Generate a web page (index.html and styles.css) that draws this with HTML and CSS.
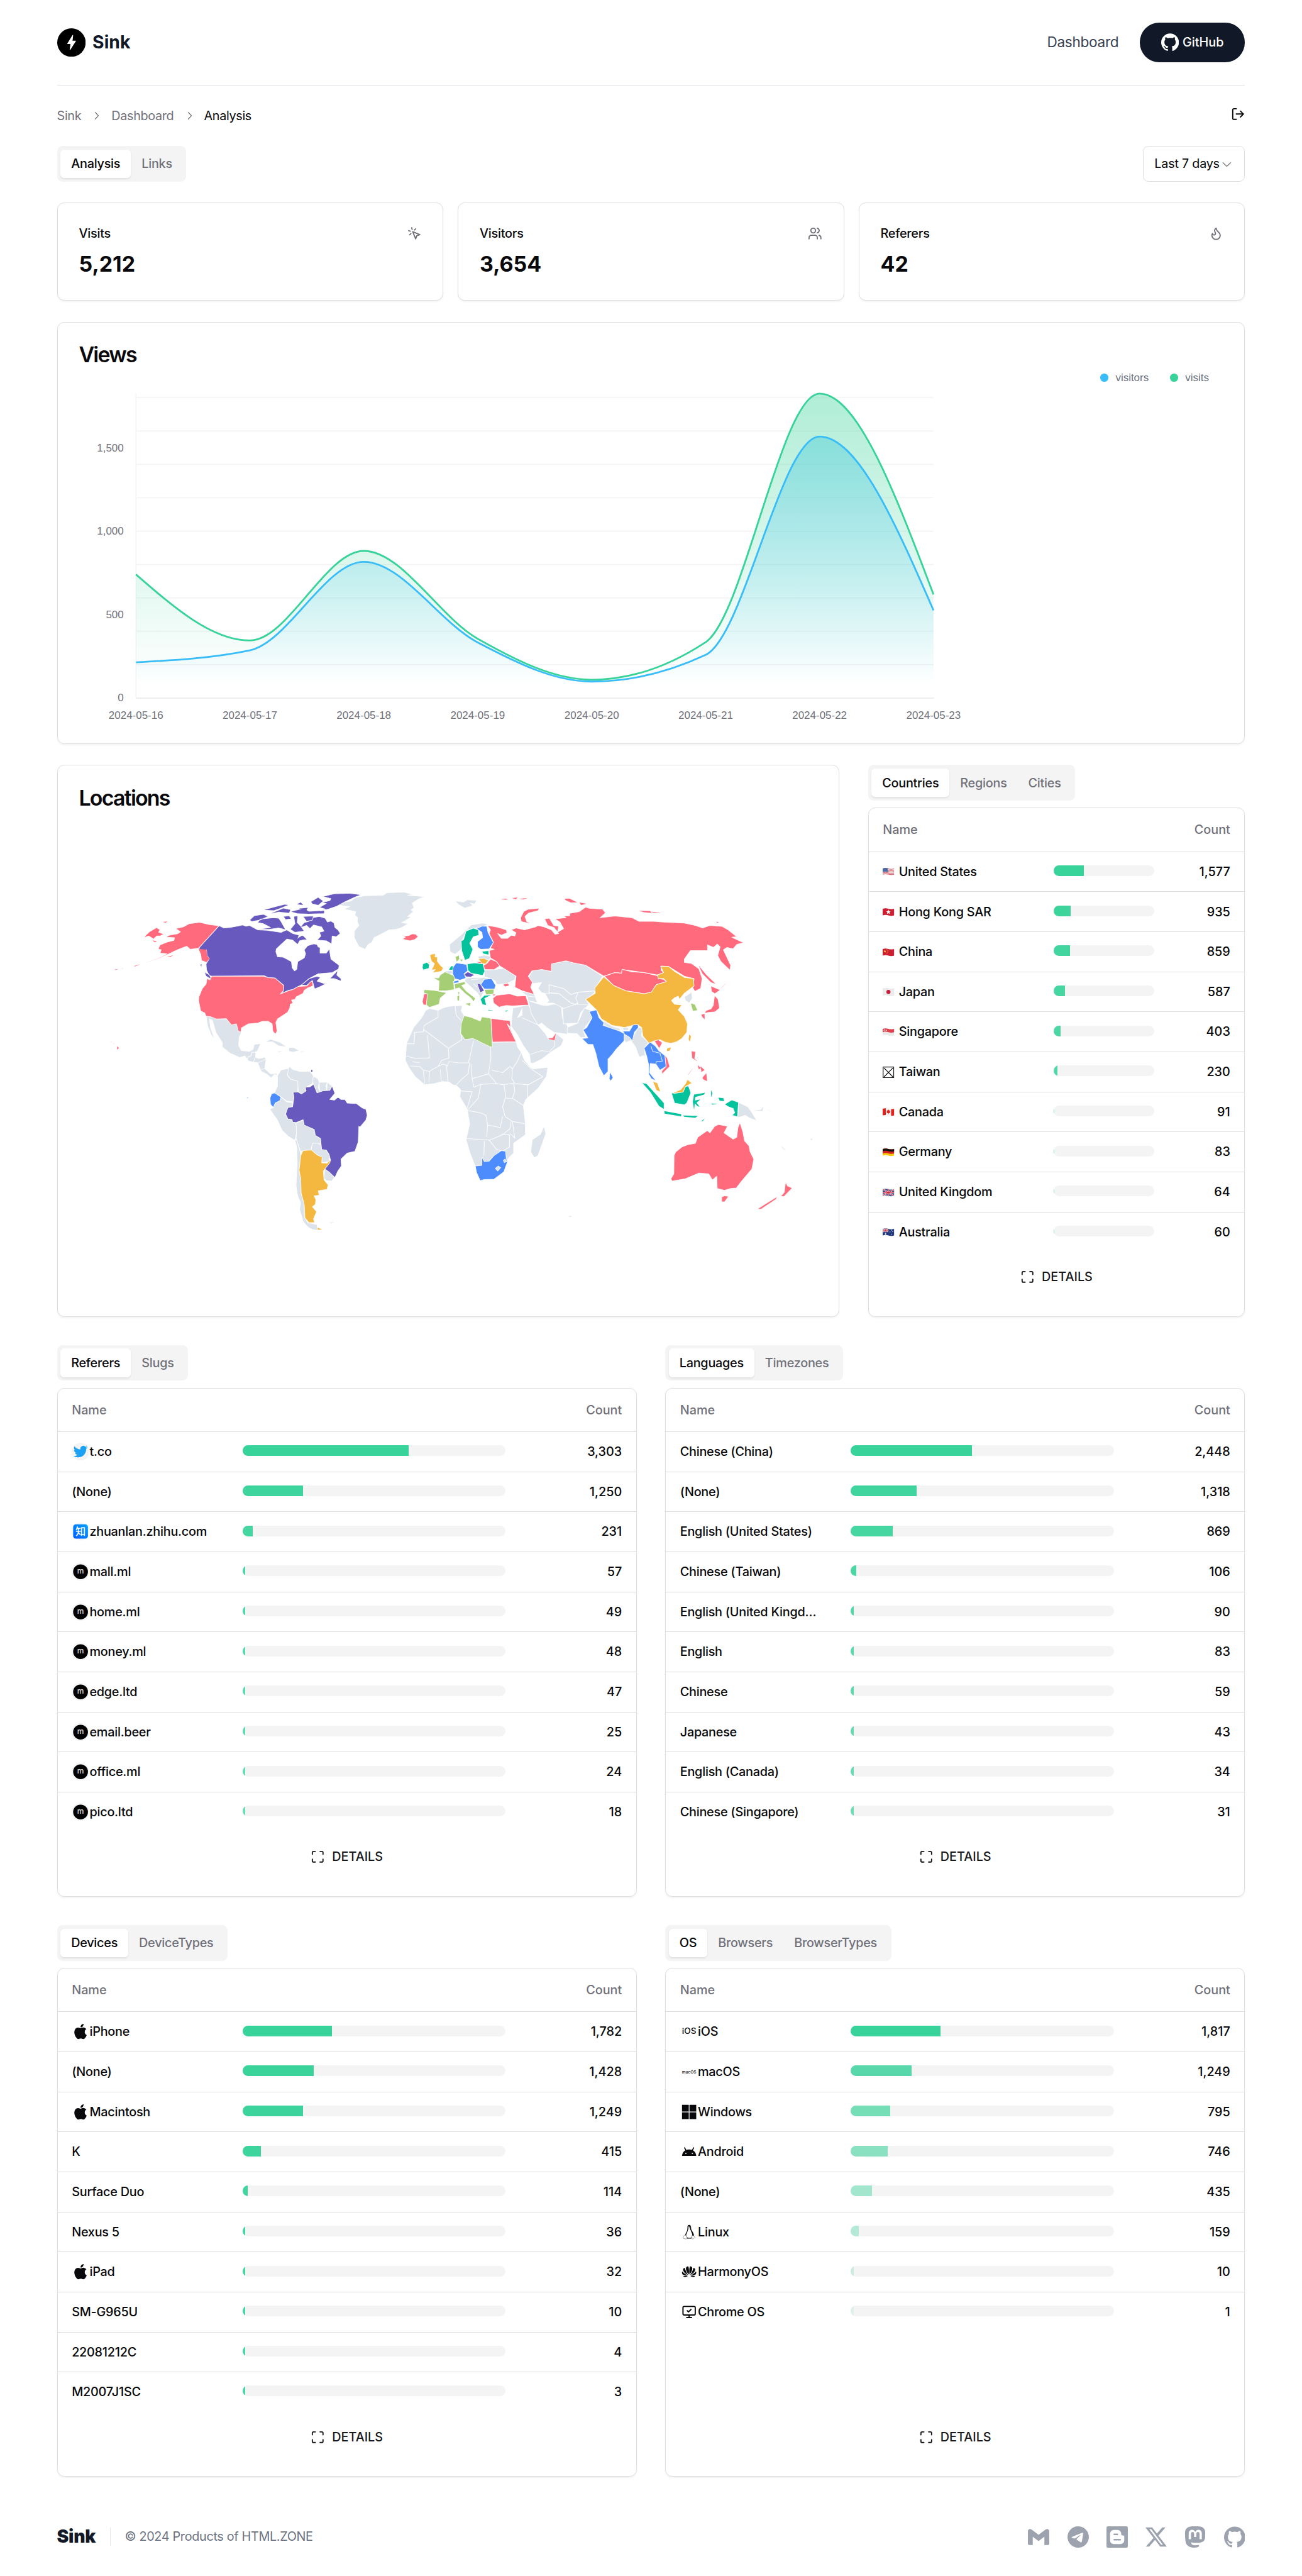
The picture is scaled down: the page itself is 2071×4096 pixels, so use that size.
FILE: index.html
```html
<!DOCTYPE html>
<html lang="en">
<head>
<meta charset="utf-8">
<title>Sink - Analysis</title>
<link rel="stylesheet" href="styles.css">
</head>
<body>
<svg class="sprite" aria-hidden="true">
  <defs>
    <symbol id="github" viewBox="0 0 24 24"><path fill="currentColor" d="M12 .297c-6.63 0-12 5.373-12 12 0 5.303 3.438 9.8 8.205 11.385.6.113.82-.258.82-.577 0-.285-.01-1.04-.015-2.04-3.338.724-4.042-1.61-4.042-1.61C4.422 18.07 3.633 17.7 3.633 17.7c-1.087-.744.084-.729.084-.729 1.205.084 1.838 1.236 1.838 1.236 1.07 1.835 2.809 1.305 3.495.998.108-.776.417-1.305.76-1.605-2.665-.3-5.466-1.332-5.466-5.93 0-1.31.465-2.38 1.235-3.22-.135-.303-.54-1.523.105-3.176 0 0 1.005-.322 3.3 1.23.96-.267 1.98-.399 3-.405 1.02.006 2.04.138 3 .405 2.28-1.552 3.285-1.23 3.285-1.23.645 1.653.24 2.873.12 3.176.765.84 1.23 1.91 1.23 3.22 0 4.61-2.805 5.625-5.475 5.92.42.36.81 1.096.81 2.22 0 1.606-.015 2.896-.015 3.286 0 .315.21.69.825.57C20.565 22.092 24 17.592 24 12.297c0-6.627-5.373-12-12-12"/></symbol>
    <symbol id="telegram" viewBox="0 0 24 24"><path fill="currentColor" d="M11.944 0A12 12 0 0 0 0 12a12 12 0 0 0 12 12 12 12 0 0 0 12-12A12 12 0 0 0 12 0a12 12 0 0 0-.056 0zm4.962 7.224c.1-.002.321.023.465.14a.506.506 0 0 1 .171.325c.016.093.036.306.02.472-.18 1.898-.962 6.502-1.36 8.627-.168.9-.499 1.201-.82 1.23-.696.065-1.225-.46-1.9-.902-1.056-.693-1.653-1.124-2.678-1.8-1.185-.78-.417-1.21.258-1.91.177-.184 3.247-2.977 3.307-3.23.007-.032.014-.15-.056-.212s-.174-.041-.249-.024c-.106.024-1.793 1.14-5.061 3.345-.48.33-.913.49-1.302.48-.428-.008-1.252-.241-1.865-.44-.752-.245-1.349-.374-1.297-.789.027-.216.325-.437.893-.663 3.498-1.524 5.83-2.529 6.998-3.014 3.332-1.386 4.025-1.627 4.476-1.635z"/></symbol>
    <symbol id="x" viewBox="0 0 24 24"><path fill="currentColor" d="M18.901 1.153h3.68l-8.04 9.19L24 22.846h-7.406l-5.8-7.584-6.638 7.584H.474l8.6-9.83L0 1.154h7.594l5.243 6.932ZM17.61 20.644h2.039L6.486 3.24H4.298Z"/></symbol>
    <symbol id="gmail" viewBox="0 0 24 24"><path fill="currentColor" d="M24 5.457v13.909c0 .904-.732 1.636-1.636 1.636h-3.819V11.73L12 16.64l-6.545-4.91v9.273H1.636A1.636 1.636 0 0 1 0 19.366V5.457c0-2.023 2.309-3.178 3.927-1.964L5.455 4.64 12 9.548l6.545-4.91 1.528-1.145C21.69 2.28 24 3.434 24 5.457z"/></symbol>
    <symbol id="blogger" viewBox="0 0 24 24"><rect width="24" height="24" rx="1.6" fill="currentColor"/><path fill="#fff" d="M8.2 4h4.2a4.2 4.2 0 0 1 4.2 4.2v.9c0 .7.4 1.1 1 1.1h1.2c.7 0 1.2.5 1.2 1.2v4.4A4.2 4.2 0 0 1 15.800 20H8.200A4.200 4.200 0 0 1 4 15.800V8.200A4.200 4.200 0 0 1 8.200 4z"/><path stroke="currentColor" stroke-width="1.7" stroke-linecap="round" d="M8.700 9h3.600M8.700 15h6.800"/></symbol>
    <symbol id="mastodon" viewBox="0 0 24 24"><path fill="currentColor" d="M23.268 5.313c-.35-2.578-2.617-4.61-5.304-5.004C17.51.242 15.792 0 11.813 0h-.03c-3.98 0-4.835.242-5.288.309C3.882.692 1.496 2.518.917 5.127.64 6.412.61 7.837.661 9.143c.074 1.874.088 3.745.26 5.611.118 1.24.325 2.47.62 3.68.55 2.237 2.777 4.098 4.96 4.857 2.336.792 4.849.923 7.256.38.265-.061.527-.132.786-.213.585-.184 1.27-.39 1.774-.753a.057.057 0 0 0 .023-.043v-1.809a.052.052 0 0 0-.02-.041.053.053 0 0 0-.046-.01 20.282 20.282 0 0 1-4.709.545c-2.73 0-3.463-1.284-3.674-1.818a5.593 5.593 0 0 1-.319-1.433.053.053 0 0 1 .066-.054c1.517.363 3.072.546 4.632.546.376 0 .75 0 1.125-.01 1.57-.044 3.224-.124 4.768-.422.038-.008.077-.015.11-.024 2.435-.464 4.753-1.92 4.989-5.604.008-.145.03-1.52.03-1.67.002-.512.167-3.63-.024-5.545zm-3.748 9.195h-2.561V8.29c0-1.309-.55-1.976-1.67-1.976-1.23 0-1.846.79-1.846 2.35v3.403h-2.546V8.663c0-1.56-.617-2.35-1.848-2.35-1.112 0-1.668.668-1.67 1.977v6.218H4.822V8.102c0-1.31.337-2.35 1.011-3.12.696-.77 1.608-1.164 2.74-1.164 1.311 0 2.302.5 2.962 1.498l.638 1.06.638-1.06c.66-.999 1.65-1.498 2.96-1.498 1.13 0 2.043.395 2.74 1.164.675.77 1.012 1.81 1.012 3.12z"/></symbol>
    <symbol id="maximize" viewBox="0 0 24 24"><path class="line" d="M8 3H5a2 2 0 0 0-2 2v3M21 8V5a2 2 0 0 0-2-2h-3M3 16v3a2 2 0 0 0 2 2h3M16 21h3a2 2 0 0 0 2-2v-3"/></symbol>
    <symbol id="chevron" viewBox="0 0 15 15"><path fill="currentColor" d="M6.158 3.135a.5.5 0 0 1 .707.023l3.75 4a.5.5 0 0 1 0 .684l-3.75 4a.5.5 0 1 1-.73-.684L9.566 7.500 6.135 3.842a.5.5 0 0 1 .023-.707z"/></symbol>
    <symbol id="apple" viewBox="-2 -2 28 28"><path fill="currentColor" d="M12.152 6.896c-.948 0-2.415-1.078-3.96-1.04-2.04.027-3.91 1.183-4.961 3.014-2.117 3.675-.546 9.103 1.519 12.09 1.013 1.454 2.208 3.09 3.792 3.039 1.52-.065 2.09-.987 3.935-.987 1.831 0 2.35.987 3.96.948 1.637-.026 2.676-1.48 3.676-2.948 1.156-1.688 1.636-3.325 1.662-3.415-.039-.013-3.182-1.221-3.22-4.857-.026-3.04 2.48-4.494 2.597-4.559-1.429-2.09-3.623-2.324-4.39-2.376-2-.156-3.675 1.09-4.61 1.09zM15.53 3.83c.843-1.012 1.4-2.427 1.245-3.83-1.207.052-2.662.805-3.532 1.818-.78.896-1.454 2.338-1.273 3.714 1.338.104 2.715-.688 3.559-1.701"/></symbol>
    <symbol id="twitter" viewBox="-3 -3 30 30"><circle cx="12" cy="12" r="15" fill="#f4f4f5"/><path fill="#1da1f2" d="M23.953 4.57a10 10 0 01-2.825.775 4.958 4.958 0 002.163-2.723c-.951.555-2.005.959-3.127 1.184a4.92 4.92 0 00-8.384 4.482C7.69 8.095 4.067 6.13 1.64 3.162a4.822 4.822 0 00-.666 2.475c0 1.71.87 3.213 2.188 4.096a4.904 4.904 0 01-2.228-.616v.06a4.923 4.923 0 003.946 4.827 4.996 4.996 0 01-2.212.085 4.936 4.936 0 004.604 3.417 9.867 9.867 0 01-6.102 2.105c-.39 0-.779-.023-1.17-.067a13.995 13.995 0 007.557 2.209c9.053 0 13.998-7.496 13.998-13.985 0-.21 0-.42-.015-.63A9.935 9.935 0 0024 4.59z"/></symbol>
    <linearGradient id="zh" x1="1" y1="0" x2="0" y2="1"><stop offset="0" stop-color="#00a6ff"/><stop offset="1" stop-color="#0057ff"/></linearGradient>
    <symbol id="zhihu" viewBox="0 0 20 20"><circle cx="10" cy="10" r="10" fill="#f4f4f5"/><rect x="1.700" y="1.900" width="16.600" height="16.200" rx="3" fill="url(#zh)"/><text x="10" y="14.200" text-anchor="middle" font-size="11.500" font-weight="500" fill="#fff" font-family="'Noto Sans CJK SC', sans-serif">知</text></symbol>
    <symbol id="m" viewBox="0 0 20 20"><circle cx="10" cy="10" r="10" fill="#f4f4f5"/><circle cx="10" cy="10" r="8.300" fill="#000"/><text x="10" y="12.300" text-anchor="middle" font-size="8.500" font-weight="500" fill="#ddd" font-family="Inter, sans-serif">m</text></symbol>
    <symbol id="ios" viewBox="0 0 20 20"><text x="2" y="13" textLength="16" lengthAdjust="spacingAndGlyphs" font-size="8.800" font-weight="500" fill="currentColor" font-family="Inter, sans-serif">iOS</text></symbol>
    <symbol id="macos" viewBox="0 0 20 20"><text x="2" y="11.700" textLength="16" lengthAdjust="spacingAndGlyphs" font-size="4.800" font-weight="500" fill="currentColor" font-family="Inter, sans-serif">macOS</text></symbol>
    <symbol id="windows" viewBox="0 0 20 20"><path fill="currentColor" d="M2 2h7.600v7.600H2zM10.400 2H18v7.600h-7.600zM2 10.400h7.600V18H2zM10.400 10.400H18V18h-7.600z"/></symbol>
    <symbol id="android" viewBox="0 0 20 20"><path fill="currentColor" d="M2 14.800C2.300 10.500 5.500 7.600 10 7.600s7.700 2.900 8 7.200z"/><path fill="none" stroke="currentColor" stroke-width="1.200" stroke-linecap="round" d="M4.900 5.700 6.600 8.900M15.100 5.700 13.400 8.900"/><path fill="#fff" d="M5.700 11.300h1.300v1.300H5.700zM13 11.300h1.300v1.300H13z"/></symbol>
    <symbol id="linux" viewBox="0 0 20 20"><path fill="currentColor" d="M10 2c1.600 0 2.200 1.200 2.200 3 0 1.700.3 2.600 1.300 4.100 1.100 1.700 1.900 3.300 1.900 4.700 0 .9-.6 1.500-1.700 1.800l-1.500 1.700H7.700L6 15.300l-.5-1.200c.2-1.800 1-3.300 1.800-4.700C8 8 8.100 6.900 8.100 5c0-1.800.5-3 1.900-3z"/><path fill="#fff" d="M9.100 5.200c.6-.5 1.300-.5 1.900 0l-.1 1.500c.9 1 1.100 2 1.500 3 .6 1.300 1.200 2.400 1.200 4 0 1.800-1 2.900-3.400 2.900-2.300 0-3.500-1.300-3.500-3 0-1.400.9-2.500 1.400-4 .4-1.300.600-2.200 1.100-3z"/><path fill="#fff" stroke="#777" stroke-width=".5" d="M5.200 13.300c.6-.2 1 .4 1.500 1.300.500 1 1.200 1.500 1 2.200-.3 1-1.300 1.100-2.300.8-.9-.3-1.500-.3-2-.6-.400-.3.2-1 .2-1.700 0-.9 1-1.300 1.600-2zM13.300 13.800c.5.500 1.200.5 1.900.1.500.5.400 1 .8 1.400.9.700.4 1.100-.4 1.500-.8.500-1.500 1.200-2.300.8-.9-.400-.3-1.500-.3-2.300z"/><path fill="#fff" d="M8.900 3.700h.8v1.200h-.8zM10.500 3.700h.8v1.200h-.8z"/></symbol>
    <symbol id="petal" viewBox="-3 -12 6 12" overflow="visible"><path d="M0-1C-2.200-4.500-2.300-8.500 0-10.700 2.300-8.500 2.200-4.500 0-1z"/></symbol>
    <symbol id="harmony" viewBox="0 0 20 20"><g fill="currentColor"><path d="M9.600 13.300C7.300 10.700 5.700 7.200 6.800 5 7.400 4.100 8.500 4 9.200 4.200 10 6.500 10 10 9.600 13.300zM10.400 13.300C12.700 10.700 14.300 7.200 13.200 5 12.600 4.100 11.500 4 10.800 4.200 10 6.500 10 10 10.400 13.300z"/><path d="M9 13.900C5.700 12.400 3 9.600 3.200 7.200 3.400 6.300 4.200 5.700 5 5.600 5.900 8.500 7.200 11.500 9 13.900zM11 13.900C14.300 12.400 17 9.600 16.800 7.200 16.600 6.300 15.800 5.700 15 5.600 14.100 8.500 12.800 11.500 11 13.900z"/><path d="M8.600 14.400C5.500 14.700 2.600 13.900 2.100 12 1.900 11 2 10.300 2.200 9.800 4 11.800 6.300 13.400 8.600 14.400zM11.400 14.400C14.500 14.700 17.400 13.900 17.900 12 18.100 11 18 10.300 17.800 9.800 16 11.800 13.700 13.400 11.400 14.400z"/><path d="M8.500 14.900C7 15.900 5.200 16.300 4.300 15.800 3.800 15.500 3.500 15.200 3.300 14.800zM11.500 14.900C13 15.900 14.800 16.300 15.700 15.800 16.200 15.500 16.500 15.200 16.700 14.800z"/></g></symbol>
    <symbol id="chromeos" viewBox="-2.500 -2.500 29 29"><path class="line" d="m9 10 2 2 4-4M4 3h16a2 2 0 0 1 2 2v10a2 2 0 0 1-2 2H4a2 2 0 0 1-2-2V5a2 2 0 0 1 2-2zM12 17v4M8 21h8"/></symbol>

    <symbol id="f-us" viewBox="0 0 26 19"><path fill="#f3eeee" d="M0 2q7-2 13 0t13 0v15q-7 2-13 0t-13 0z"/><path fill="none" stroke="#d8626b" stroke-width="1.500" d="M0 3q7-2 13 0t13 0M0 6q7-2 13 0t13 0M0 9q7-2 13 0t13 0M0 12q7-2 13 0t13 0M0 15q7-2 13 0t13 0"/><path fill="#4b6ba5" d="M0 2q6-2 12-.300v8.300q-6-1.500-12 0z"/></symbol>
    <symbol id="f-hk" viewBox="0 0 26 19"><path fill="#cb1f31" d="M0 2q7-2 13 0t13 0v15q-7 2-13 0t-13 0z"/><path fill="#fff" d="m13 4 1.400 3.600 3.900.2-3 2.500 1 3.800-3.300-2.100-3.300 2.100 1-3.800-3-2.500 3.900-.2z"/></symbol>
    <symbol id="f-cn" viewBox="0 0 26 19"><path fill="#cb1f31" d="M0 2q7-2 13 0t13 0v15q-7 2-13 0t-13 0z"/><path fill="#f5c242" d="m5 4 .8 2.200 2.300.1-1.800 1.500.6 2.200L5 8.800 3.100 10l.6-2.200-1.800-1.500 2.300-.1zM9 3h1.500v1.500H9zM11 5.500h1.500V7H11zM11 8.500h1.500V10H11zM9 11h1.500v1.500H9z"/></symbol>
    <symbol id="f-jp" viewBox="0 0 26 19"><path fill="#ececec" stroke="#d5d5d5" stroke-width=".6" d="M.3 2q7-2 13 0t12.400 0v15q-7 2-13 0t-12.400 0z"/><circle cx="13" cy="9.500" r="4.600" fill="#c41e3a"/></symbol>
    <symbol id="f-sg" viewBox="0 0 26 19"><path fill="#ebe9e9" d="M0 2q7-2 13 0t13 0v15q-7 2-13 0t-13 0z"/><path fill="#e0404c" d="M0 2q7-2 13 0t13 0v7.500q-7 2-13 0t-13 0z"/><circle cx="5" cy="5.500" r="2.600" fill="#fff"/><circle cx="6" cy="5.500" r="2.300" fill="#e0404c"/><circle cx="8" cy="5.500" r="1.300" fill="#fff"/></symbol>
    <symbol id="f-tw" viewBox="0 0 26 26"><path fill="none" stroke="#111" stroke-width="1.800" d="M1 1h24v24H1zM3 3l20 20M23 3 3 23"/></symbol>
    <symbol id="f-ca" viewBox="0 0 26 19"><path fill="#f3f0f0" d="M0 2q7-2 13 0t13 0v15q-7 2-13 0t-13 0z"/><path fill="#e0201b" d="M0 2q3.500-1 7-.9v15.300q-3.500 0-7 .7zM19 2.700q3.500.2 7-.7v15q-3.500 1-7 .9zM13 4l1.500 2 2-.300-.500 2.500 1.500 1-2.500 3h-1.500v2h-1v-2H11l-2.500-3 1.500-1-.5-2.500 2 .3z"/></symbol>
    <symbol id="f-de" viewBox="0 0 26 19"><path fill="#f6c915" d="M0 2q7-2 13 0t13 0v15q-7 2-13 0t-13 0z"/><path fill="#d8201c" d="M0 2q7-2 13 0t13 0v10q-7 2-13 0t-13 0z"/><path fill="#141414" d="M0 2q7-2 13 0t13 0v5q-7 2-13 0t-13 0z"/></symbol>
    <symbol id="f-gb" viewBox="0 0 26 19"><path fill="#3a518f" d="M0 2q7-2 13 0t13 0v15q-7 2-13 0t-13 0z"/><path fill="none" stroke="#fff" stroke-width="3" d="m1 2 24 15M25 3 1 16M13 1.500v16M0 9.500h26"/><path fill="none" stroke="#cf2e42" stroke-width="1.600" d="m1 2 24 15M25 3 1 16M13 1.500v16M0 9.500h26"/></symbol>
    <symbol id="f-au" viewBox="0 0 26 19"><path fill="#223a80" d="M0 2q7-2 13 0t13 0v15q-7 2-13 0t-13 0z"/><path fill="none" stroke="#fff" stroke-width="2.400" d="m1 2 11 7M12 2 1 9M6.500 1.500V10M0 5.500h13"/><path fill="none" stroke="#cf2e42" stroke-width="1.100" d="m1 2 11 7M12 2 1 9M6.500 1.500V10M0 5.500h13"/><g fill="#fff"><circle cx="6.500" cy="13.500" r="1.600"/><circle cx="19.500" cy="5" r="1"/><circle cx="19.500" cy="14" r="1"/><circle cx="16.500" cy="9" r="1"/><circle cx="22.500" cy="8" r="1"/></g></symbol>

    <linearGradient id="fill-visits" x1="0" y1="0" x2="0" y2="1"><stop offset=".05" stop-color="#38d39a" stop-opacity=".38"/><stop offset=".95" stop-color="#38d39a" stop-opacity="0"/></linearGradient>
    <linearGradient id="fill-visitors" x1="0" y1="0" x2="0" y2="1"><stop offset=".05" stop-color="#38bdf8" stop-opacity=".38"/><stop offset=".95" stop-color="#38bdf8" stop-opacity="0"/></linearGradient>
  </defs>
</svg>

<header class="topbar">
  <a class="brand">
    <svg width="32" height="32" viewBox="0 0 32 32"><circle cx="16" cy="16" r="16"/><path fill="#fff" stroke="#fff" stroke-width=".8" stroke-linejoin="round" d="M17.500 7.900 11.700 17.300h3.700l-.9 6.500 6.100-9.500h-3.800z"/></svg>
    <span>Sink</span>
  </a>
  <nav>
    <a class="nav-link">Dashboard</a>
    <a class="github-btn"><svg width="20" height="20"><use href="#github"/></svg>GitHub</a>
  </nav>
</header>

<main>
  <div class="crumb-row">
    <nav class="crumbs"><span>Sink</span><svg width="14" height="14"><use href="#chevron"/></svg><span>Dashboard</span><svg width="14" height="14"><use href="#chevron"/></svg><span class="current">Analysis</span></nav>
    <svg width="16" height="16" viewBox="0 0 24 24"><path class="line" d="M9 21H5a2 2 0 0 1-2-2V5a2 2 0 0 1 2-2h4M16 17l5-5-5-5M21 12H9"/></svg>
  </div>

  <div class="filter-row">
    <div class="tabs"><span class="tab active">Analysis</span><span class="tab">Links</span></div>
    <div class="select">Last 7 days<svg width="16" height="16"><use href="#chevron" transform="rotate(90 8 8)"/></svg></div>
  </div>

  <section class="stats">
    <div class="card stat">
      <h3>Visits<svg width="16" height="16" viewBox="0 0 24 24"><path class="line" d="m9 9 5 12 1.800-5.200L21 14ZM7.200 2.200 8 5.100M5.100 8l-2.900-.8M14 4.100 12 6M6 12l-1.900 2"/></svg></h3>
      <p>5,212</p>
    </div>
    <div class="card stat">
      <h3>Visitors<svg width="16" height="16" viewBox="0 0 24 24"><path class="line" d="M16 21v-2a4 4 0 0 0-4-4H6a4 4 0 0 0-4 4v2M22 21v-2a4 4 0 0 0-3-3.870M16 3.130a4 4 0 0 1 0 7.750"/><circle class="line" cx="9" cy="7" r="4"/></svg></h3>
      <p>3,654</p>
    </div>
    <div class="card stat">
      <h3>Referers<svg width="16" height="16" viewBox="0 0 24 24"><path class="line" d="M8.500 14.500A2.500 2.500 0 0 0 11 12c0-1.380-.5-2-1-3-1.072-2.143-.224-4.054 2-6 .5 2.500 2 4.900 4 6.500 2 1.600 3 3.500 3 5.500a7 7 0 1 1-14 0c0-1.153.433-2.294 1-3a2.500 2.500 0 0 0 2.500 2.500z"/></svg></h3>
      <p>42</p>
    </div>
  </section>

  <section class="card views">
    <h2>Views</h2>
    <div class="legend"><span><i class="dot blue"></i>visitors</span><span><i class="dot green"></i>visits</span></div>
    <svg class="chart" viewBox="89 433 1286 378">
      <path class="grid" d="M153.500 447.300H1050.400M153.500 484.900H1050.400M153.500 522.300H1050.400M153.500 559.900H1050.400M153.500 597.400H1050.400M153.500 634.900H1050.400M153.500 672.400H1050.400M153.500 709.900H1050.400M153.500 747.400H1050.400M153.500 442.800V785"/>
      <path class="axis" d="M153.500 785.200H1051"/>
      <path fill="url(#fill-visitors)" d="M153.500 744.800C196.200 742.600 238.900 740.300 281.600 731.400C324.300 722.500 367 631.900 409.700 631.900C452.400 631.900 495.100 700.100 537.800 722.500C580.500 744.900 623.300 766.500 666 766.500C708.700 766.500 751.400 756.500 794.100 736.500C836.800 716.500 879.500 491 922.200 491C964.900 491 1007.600 588.700 1050.300 686.400V785H153.500Z"/>
      <path fill="url(#fill-visits)" d="M153.500 646C196.200 683.150 238.900 720.300 281.600 720.300C324.300 720.300 367 619.600 409.700 619.600C452.400 619.600 495.100 694.300 537.800 718.400C580.500 742.500 623.300 764.400 666 764.400C708.700 764.400 751.400 750.300 794.100 722.200C836.800 694.100 879.500 442.800 922.200 442.800C964.900 442.800 1007.600 555.700 1050.300 668.600V785H153.500Z"/>
      <path class="series visits" d="M153.500 646C196.200 683.150 238.900 720.300 281.600 720.300C324.300 720.300 367 619.600 409.700 619.600C452.400 619.600 495.100 694.300 537.800 718.400C580.500 742.500 623.300 764.400 666 764.400C708.700 764.400 751.400 750.300 794.100 722.200C836.800 694.100 879.500 442.800 922.200 442.800C964.900 442.800 1007.600 555.700 1050.300 668.600"/>
      <path class="series visitors" d="M153.500 744.800C196.200 742.600 238.900 740.300 281.600 731.400C324.300 722.500 367 631.900 409.700 631.900C452.400 631.900 495.100 700.100 537.800 722.500C580.500 744.900 623.300 766.500 666 766.500C708.700 766.500 751.400 756.500 794.100 736.500C836.800 716.500 879.500 491 922.200 491C964.900 491 1007.600 588.700 1050.300 686.400"/>
      <g class="ylabels"><text x="139.700" y="507.600">1,500</text><text x="139.700" y="601.400">1,000</text><text x="139.700" y="695">500</text><text x="139.700" y="788.800">0</text></g>
      <g class="xlabels"><text x="153.500" y="808.700">2024-05-16</text><text x="281.600" y="808.700">2024-05-17</text><text x="409.700" y="808.700">2024-05-18</text><text x="537.800" y="808.700">2024-05-19</text><text x="666" y="808.700">2024-05-20</text><text x="794.100" y="808.700">2024-05-21</text><text x="922.200" y="808.700">2024-05-22</text><text x="1050.300" y="808.700">2024-05-23</text></g>
    </svg>
  </section>

  <section class="geo">
    <div class="card locations">
      <h2>Locations</h2>
      <svg class="map" viewBox="89 909 830 546">
        <!-- Americas, Greenland, western Europe -->
        <g transform="matrix(.26148 0 0 .274235 110 980)">
          <g class="none">
            <path d="M1035 138 1070 125 1090 122 1110 108 1150 100 1230 98 1245 88 1320 85 1358 95 1335 98 1408 104 1380 115 1355 130 1362 150 1350 158 1360 165 1335 185 1350 188 1310 210 1337 215 1310 230 1285 238 1255 240 1220 258 1190 272 1182 290 1165 300 1152 320 1125 308 1115 290 1105 270 1105 245 1125 222 1118 205 1120 190 1108 180 1112 165 1060 155 1085 145Z"/>
            <path d="M468 594 488 596 512 605 555 604 577 630 590 622 598 625 607 655 620 661 610 680 608 715 620 735 655 738 670 730 675 710 703 706 690 735 680 742 665 742 662 757 650 760 645 770 635 757 612 763 570 745 538 720 538 702 510 660 495 610 482 605 487 640 505 690 490 670 475 635Z"/>
            <path d="M645 770 650 760 662 757 665 742 682 742 680 762 695 768 720 762 726 770 720 808 745 830 770 828 775 838 762 832 748 847 730 832 705 820 690 785 650 778ZM690 785 726 770M705 812 720 808M672 780 680 762"/>
            <path class="fine" d="M727 698 745 690 785 702 810 718 780 714 755 698ZM825 724 845 724 865 735 840 740 825 736ZM778 738 793 740 780 741ZM876 738 888 738 878 740ZM1000 1440 1018 1438 1005 1442Z"/>
            <path d="M775 838 790 815 822 808 820 840 832 852 865 860 862 905 842 905 846 925 840 945 815 942 790 925 762 908 775 880Z"/>
            <path d="M822 808 828 800 840 812 870 820 915 820 930 840 925 870 898 885 895 905 878 913 865 905 862 860 832 852 818 835Z"/>
            <path d="M930 840 948 850 955 865 990 865 1010 880 1000 898 970 900 945 908 932 875 925 860ZM955 865 950 885 958 902M990 865 983 880 988 898"/>
            <path d="M790 925 815 945 840 948 838 965 820 968 810 995 820 1015 838 1018 840 1028 855 1032 857 1075 850 1103 820 1085 795 1062 775 1020 742 975 757 968 765 950 785 940Z"/>
            <path d="M855 1032 885 1020 890 1040 933 1058 938 1083 960 1095 960 1118 925 1115 920 1142 885 1145 875 1150 855 1095 857 1075Z"/>
            <path d="M925 1115 950 1115 962 1122 965 1140 985 1143 997 1160 997 1190 965 1195 967 1175 920 1145Z"/>
            <path d="M978 1222 1000 1232 1020 1255 1008 1270 985 1268 975 1258Z"/>
            <path d="M850 1103 857 1100 873 1150 875 1165 868 1225 875 1260 877 1320 890 1365 893 1420 905 1440 945 1448 948 1472 925 1468 905 1458 885 1435 870 1385 875 1360 862 1330 855 1290 860 1200 858 1130Z"/>
          </g>
          <g class="purple">
            <path d="M524 223 545 232 570 230 600 225 625 220 640 225 655 222 690 240 730 242 790 250 815 240 840 255 868 262 862 275 880 262 900 278 870 285 862 300 840 282 815 278 790 300 770 318 768 330 775 350 800 352 835 370 838 395 848 408 858 402 862 370 890 355 896 338 890 322 905 305 930 297 945 300 950 310 958 312 958 335 985 335 998 318 1005 360 1040 385 1038 400 1010 415 950 420 910 440 880 465 865 472 842 484 822 488 787 503 800 490 802 468 765 438 735 436 718 428 490 430 480 425 470 405 468 380 482 358 472 345 470 322 450 327 436 315Z"/>
            <path d="M878 466 912 440 945 430 960 435 945 450 975 460 988 458 965 470 935 482 932 472 925 448 912 458 900 468Z"/>
            <path d="M1000 440 1035 405 1030 425 1048 440 1048 450 1020 440ZM460 412 483 425 490 442 468 430ZM442 382 450 380 448 395Z"/>
            <path d="M890 188 925 190 955 185 980 192 990 208 1005 204 1018 212 1022 230 1035 240 1045 255 1028 268 1010 265 1008 298 985 285 945 282 962 265 955 250 975 245 965 228 930 220 915 235 900 222 870 232 890 210 910 205Z"/>
            <path d="M690 238 745 230 715 215 690 210 700 196 755 190 780 192 790 205 810 240 780 232 740 238ZM655 200 675 182 715 176 735 185 700 200 665 206ZM845 185 862 182 860 210 875 225 890 245 850 250 830 238 850 215ZM800 185 825 182 835 195 810 198ZM885 185 930 183 925 200 900 205Z"/>
            <path class="fine" d="M720 158 770 145 805 137 820 138 790 150 760 160ZM750 172 800 152 830 158 825 170 780 166ZM835 165 890 152 910 165 975 162 975 172 910 174 860 172ZM920 125 950 108 970 122 950 138 925 132ZM860 135 875 128 885 138ZM868 153 905 150 900 158ZM860 275 885 265 900 280Z"/>
            <path d="M1135 96 1085 90 1020 92 970 103 1005 112 1000 120 965 128 985 132 955 148 980 155 960 162 995 155 1030 143 1065 125 1110 105Z"/>
            <path d="M842 905 865 905 878 913 898 900 895 885 915 883 930 873 945 908 970 900 1000 898 1010 880 1022 910 1000 935 1020 938 1035 925 1048 935 1065 935 1075 950 1115 952 1140 970 1155 975 1161 1000 1155 1020 1130 1048 1125 1045 1122 1110 1108 1148 1075 1155 1048 1180 1050 1208 1035 1228 1022 1255 1000 1235 978 1220 1003 1185 997 1160 985 1143 965 1140 960 1095 938 1083 933 1058 890 1040 885 1018 855 1030 840 1028 838 1018 820 1015 810 995 820 968 840 965 846 925Z"/>
            <path class="fine" d="M920 815h5v6h-5z"/>
          </g>
          <g class="red">
            <path d="M524 223 436 315 400 320 385 307 350 320 330 328 300 342 270 355 240 365 203 376 240 363 275 350 300 338 270 335 275 322 262 318 270 302 300 290 330 283 332 272 296 270 310 262 345 256 358 248 338 235 370 228 395 215 440 209 480 218Z"/>
            <path class="fine" d="M203 269 225 249 255 232 268 240 262 250 283 258 270 264 255 264 242 276 222 264ZM283 208 300 206 295 210ZM158 389 182 382 165 389ZM75 403 88 401 80 404ZM105 399 110 398ZM436 318 470 322 472 345 482 358 470 372 450 365 446 340ZM85 718 93 724 86 731ZM57 699 62 701ZM70 706 74 708ZM238 284 256 286 248 290ZM302 350 325 345 315 350Z"/>
            <path d="M492 430 716 430 735 436 765 438 802 468 800 490 787 503 822 490 842 484 865 472 902 470 915 455 925 448 927 470 905 478 890 488 885 500 855 515 850 525 835 528 842 540 830 545 828 560 818 578 775 605 768 620 773 655 766 668 755 655 752 625 735 615 710 615 690 622 650 625 620 642 617 660 607 655 598 625 577 630 555 604 512 605 488 596 468 594 462 580 445 573 440 550 436 530 437 515 452 480 468 462 472 440 485 445Z"/>
            <path d="M1308 260 1325 265 1340 263 1355 256 1370 258 1380 268 1365 280 1345 285 1312 278 1325 270Z"/>
            <path d="M1405 502 1422 503 1416 548 1403 548 1398 535Z"/>
          </g>
          <g class="yellow">
            <path d="M885 1145 920 1142 945 1162 967 1172 965 1195 988 1197 1003 1180 1000 1195 972 1228 975 1265 993 1285 988 1303 950 1310 955 1328 932 1330 940 1345 938 1365 925 1375 943 1395 930 1425 935 1440 910 1440 893 1420 890 1365 877 1320 875 1260 868 1225 875 1165ZM945 1458 972 1470 948 1470Z"/>
            <path d="M1437 340 1455 337 1452 350 1463 352 1462 368 1475 385 1488 396 1480 410 1440 416 1455 402 1437 405 1445 390 1450 378 1438 370 1430 345ZM1420 372 1432 370 1428 378Z"/>
          </g>
          <path class="teal" d="M1400 380 1418 373 1428 382 1426 398 1402 404 1398 395Z"/>
          <path class="blue" d="M762 908 790 925 785 940 765 950 757 968 745 955 743 928 750 912ZM642 926 650 924 648 932Z"/>
          <path class="green" d="M1442 436 1468 437 1475 425 1495 412 1540 430 1533 458 1535 485 1500 490 1468 490 1470 450ZM1405 485 1450 488 1502 498 1475 520 1470 545 1428 558 1415 548 1420 502 1405 500Z"/>
        </g>

        <!-- Europe, Africa, Asia, Oceania -->
        <g transform="matrix(.274235 0 0 .274235 500 980)">
          <g class="none">
            <path d="M-60 562-25 570-5 560 18 554 45 552 75 550 70 572 82 592 110 598 148 614 155 595 192 603 270 612 272 640 295 698 302 722 315 740 330 775 355 803 365 810 425 803 420 840 385 890 335 935 325 960 333 1030 333 1080 285 1115 285 1155 262 1178 258 1205 235 1240 205 1262 148 1268 128 1210 108 1160 90 1100 105 1035 95 975 65 925 68 895 50 878 35 875 20 863-10 862-40 870-80 875-120 840-144 805-159 775-154 705-125 640-92 600-75 570Z"/>
            <path class="border" d="M-25 570V598L-82 632-85 658-120 660-123 707-154 707M-82 650 18 725 73 690 68 665M-68 672-60 765-116 767-155 758M18 725 20 765-10 775-25 800-45 810-60 820-85 815-100 800-140 798M-25 800-5 790 10 795 15 860M-60 820-62 865M-15 812-12 860M-85 815-80 870M-130 780-100 785M45 552 50 590 68 610M120 695 105 765 100 785 60 785 20 780 12 800M105 785 98 830 75 850 50 875M190 720 192 765 182 830 115 850 110 790M198 700H295M315 745 300 780 280 810 270 800 240 825 195 815M280 810 278 850 290 870 345 875 405 842 360 812 320 775M115 850 122 885 150 873 215 870 245 875 285 868M182 830 215 870M285 868 290 900 280 930 325 960M245 875 253 920 240 965 250 1005 280 1025 333 1035M253 930 280 932M65 900 115 903 95 970M150 875 140 930 100 975M95 980 150 990 172 1000 178 1040 230 1050 240 1005M178 1040 175 1090M90 1095 185 1102 240 1080 270 1055 275 1025M280 1025 290 1095 272 1075M165 1105 163 1165M185 1102 215 1140 240 1147 268 1130 268 1080 235 1078M342 877 343 930M128 1208H155"/>
            <path d="M410 1045 417 1075 405 1110 385 1165 370 1175 355 1150 362 1100 395 1078Z"/>
            <path d="M282 560 345 548 370 590 385 630 415 665 428 688 453 692 460 665 490 690 480 715 440 740 400 770 365 787 355 785 350 750 325 715 300 670 275 635 278 600ZM300 600 320 590 320 560M320 600 385 630M355 750 400 735 440 740M453 692 455 715 435 735"/>
            <path d="M345 530 375 540 400 548 420 550 450 545 480 545 485 600 510 640 505 668 450 660 420 640 400 622 385 630 358 585Z"/>
            <path d="M485 560 510 550 540 545 595 545 560 580 548 622 490 625Z"/>
            <path d="M505 640 548 622 575 560 600 570 607 600 570 650 580 680 560 682 545 665 505 663Z"/>
            <path d="M410 495 430 498 470 500 520 540 540 545 490 562 450 540 420 540 430 530Z"/>
            <path d="M430 465 490 480 520 505 550 495 540 520 560 525 540 545 520 540 470 500 430 498Z"/>
            <path d="M550 495 620 490 610 505 580 525 595 545 550 545 540 520Z"/>
            <path d="M345 435 365 405 400 402 440 410 440 380 500 367 530 375 580 385 650 430 625 470 620 490 550 495 520 505 490 480 430 465 430 502 400 498 385 480 400 455 365 460Z"/>
            <path d="M312 490 370 503 382 538 345 530 340 510ZM345 512 372 515"/>
            <path d="M165 405 205 403 245 398 292 425 290 445 255 460 215 465 210 450 190 440 165 432Z"/>
            <path d="M85 450 90 438 125 435 165 435 190 440 165 443 150 465 165 490 150 520 138 500 100 465ZM110 445 150 440M120 460 135 475M140 495 165 490"/>
            <path d="M22 300 70 260 110 220 160 212 182 218 150 230 120 235 95 240 75 280 70 320 45 340 25 330Z"/>
            <path class="fine" d="M48 123 80 128 95 118 132 120 125 132 105 128 115 140 85 150 60 135ZM5 410 30 408 35 418 20 420ZM140 350 165 345 190 350 185 362 145 358ZM1275 980 1300 978 1308 965 1305 982ZM1382 1126 1400 1142 1392 1138ZM1502 1098 1510 1096 1508 1102ZM1325 975 1340 985ZM512 1413 524 1414 514 1417Z"/>
            <path d="M655 614 690 635 722 645 722 656 690 650 652 628ZM732 642 755 640 757 652 735 652ZM735 667 765 672 768 692 745 702 738 690Z"/>
            <path d="M790 650 797 640 812 640 810 675 838 702 820 725 825 760 840 810 820 755 800 762 785 720 765 692 782 665Z"/>
            <path d="M985 515 1015 495 1018 520 1005 540 990 530Z"/>
            <path d="M1207 947 1245 965 1260 985 1282 1022 1250 1010 1235 1000 1205 1010Z"/>
          </g>
          <g class="red">
            <path d="M178 222 215 228 255 240 258 252 235 262 220 255 235 275 260 275 275 262 290 265 295 252 275 240 295 232 330 240 375 228 385 222 410 228 440 240 455 258 470 255 450 230 425 222 412 195 432 192 450 222 470 225 465 250 490 235 475 208 455 195 500 190 490 183 515 182 515 172 555 165 580 147 600 152 650 155 662 170 640 190 700 183 770 190 800 205 860 205 900 208 985 212 1030 222 1060 232 1090 222 1140 226 1165 240 1200 268 1180 270 1228 293 1200 300 1185 318 1160 312 1145 322 1175 385 1172 405 1135 370 1122 345 1132 310 1120 298 1105 312 1080 302 1080 325 1010 325 985 360 985 373 1015 378 1045 400 1058 440 1052 480 1028 492 1020 478 1025 440 985 430 920 390 890 388 890 405 900 415 875 425 820 415 730 402 728 418 700 415 655 430 580 385 530 375 500 367 440 380 440 410 400 402 360 408 345 430 362 455 355 475 370 505 320 490 290 475 295 430 245 398 228 388 215 370 190 355 185 325 205 320 190 315 202 290 185 255 190 240Z"/>
            <path class="fine" d="M243 465 262 460 265 468 250 472ZM388 153 385 160 345 170 330 185 338 208 350 212 318 205 315 190 328 165 345 157ZM495 112 515 112 545 127 520 128 498 118ZM555 128 582 133 562 138ZM800 162 845 163 850 170 820 168ZM850 166 888 171 860 170ZM235 115 252 112 260 116ZM280 110 300 108 295 114ZM310 113 340 110 325 115ZM1045 388 1075 425 1112 460 1095 455 1060 420ZM1116 207 1126 209 1120 211ZM135 372 153 372 150 377Z"/>
            <path d="M162 385 175 378 190 360 215 370 228 388 205 403 165 402Z"/>
            <path d="M200 520 215 508 245 505 270 502 300 512 335 510 347 548 280 552 255 550 225 557 203 540ZM197 505 212 503 205 512Z"/>
            <path d="M658 430 700 415 728 418 730 402 770 412 820 415 850 422 875 428 880 440 900 443 912 452 870 465 850 495 820 502 745 490 695 468Z"/>
            <path d="M192 603 245 610 270 612 273 640 258 625 295 698 198 700Z"/>
            <path class="fine" d="M428 685 445 683 458 665 453 692 430 688Z"/>
            <path d="M862 695 875 688 895 702 882 728 915 765 925 800 893 832 893 818 910 800 905 755 878 720Z"/>
            <path class="fine" d="M1110 512 1122 525 1128 560 1110 575 1085 577 1070 580 1075 572 1095 565 1105 550ZM1055 588 1068 585 1068 606 1060 598ZM1095 472 1130 487 1110 500 1098 492ZM1135 480 1155 460ZM1015 738 1030 740 1026 768 1038 778 1018 766ZM1060 845 1075 828 1078 860 1062 852ZM1000 835 1018 810 1005 828ZM1040 795 1052 805 1045 812ZM1052 800 1068 815 1055 822Z"/>
            <path d="M943 1165 950 1150 975 1130 1000 1120 1030 1115 1040 1090 1080 1062 1090 1072 1110 1045 1125 1038 1162 1045 1148 1072 1185 1098 1200 1090 1205 1050 1213 1030 1225 1068 1232 1105 1250 1125 1255 1150 1270 1180 1262 1220 1220 1270 1198 1298 1175 1300 1150 1308 1120 1300 1118 1250 1100 1265 1085 1240 1045 1237 990 1260 935 1270 930 1260 942 1240Z"/>
            <path d="M1138 1335 1150 1330 1167 1332 1150 1355 1138 1355ZM1400 1273 1408 1290 1428 1298 1395 1332 1380 1333 1395 1315ZM1368 1332 1360 1345 1300 1385 1283 1385 1310 1368Z"/>
          </g>
          <g class="yellow">
            <path d="M655 432 695 468 745 490 820 502 850 495 870 465 912 452 900 440 878 440 875 425 900 415 888 390 920 390 945 410 985 435 1022 440 1025 470 1005 485 985 500 965 525 960 512 945 518 932 530 945 545 975 548 960 568 985 595 998 625 995 660 975 685 955 698 930 705 905 700 885 690 862 695 840 705 815 675 810 640 790 628 740 640 690 632 645 605 625 568 580 525 620 500 618 478Z"/>
            <path class="fine" d="M1005 670 1012 675 1008 698 1003 690ZM914 727 930 722 925 735 915 737Z"/>
            <path d="M140 358 165 357 182 366 170 380 155 378ZM855 860 875 868 888 905 870 897ZM938 908 970 895 990 870 998 853 1016 868 990 882 980 905 945 910Z"/>
          </g>
          <g class="blue">
            <path d="M595 575 625 568 635 600 655 620 652 632 720 655 738 665 738 695 705 730 690 750 672 770 672 820 655 838 635 800 622 745 610 710 590 710 565 685 590 683 570 650 585 640 607 600Z"/>
            <path d="M725 642 735 655 760 655 775 630 795 628 797 640 780 660 772 695 760 680 740 668ZM680 822 693 845 683 860 677 850Z"/>
            <path d="M820 725 845 700 865 715 880 735 905 755 910 800 885 815 868 790 845 788 842 825 870 860 850 850 838 830 838 790 830 755ZM848 715 855 738 885 745 895 778 870 780 868 795"/>
            <path d="M133 235 155 225 175 225 180 250 202 292 185 318 150 320 137 310 137 288 158 272 155 250Z"/>
            <path d="M35 395 50 375 92 382 97 408 82 420 90 438 65 446 45 440 35 420Z"/>
            <path d="M37 452 58 446 62 455 42 459ZM150 465 165 443 195 440 212 468 207 482 165 482Z"/>
            <path d="M128 1208 155 1205 155 1172 165 1190 185 1188 205 1165 235 1145 252 1147 255 1178 260 1190 245 1232 205 1262 165 1263 148 1268 133 1235Z"/>
          </g>
          <path class="none" d="M210 1218 222 1208 232 1215 220 1228ZM243 1185 250 1179 257 1190 247 1194Z"/>
          <g class="teal">
            <path d="M70 285 80 280 90 245 120 233 140 240 143 262 120 268 105 295 118 320 103 358 85 364 72 325Z"/>
            <path d="M95 380 125 375 160 380 167 410 158 427 110 418 97 405ZM155 328 183 325 183 343 160 338ZM18 405 28 388 38 388 35 405Z"/>
            <path class="fine" d="M150 525 165 510 190 508 165 520 172 548 158 545ZM180 568 200 571 182 570ZM250 573 262 570 255 575Z"/>
            <path d="M932 908 945 910 980 905 990 882 1002 880 1012 908 995 950 985 957 945 950ZM810 866 830 870 880 925 902 950 902 976 880 962 845 905Z"/>
            <path class="fine" d="M903 983 972 996 972 1004 905 993ZM980 1001 1040 1003 1030 1010 985 1006ZM1025 915 1070 908 1065 915 1030 925 1028 940 1050 935 1035 948 1047 965 1038 962 1028 950 1025 975 1020 945ZM1095 898 1100 910 1095 925ZM1095 952 1118 953 1100 956ZM1055 1024 1068 1014 1060 1024ZM1125 928 1145 930 1148 942 1130 940Z"/>
            <path d="M1150 955 1180 937 1207 947 1203 1006 1180 1000 1192 990 1185 972 1165 965Z"/>
          </g>
          <g class="green">
            <path d="M82 592 110 598 148 614 155 596 192 603 198 720 190 720 118 685 85 690 68 665 70 625Z"/>
            <path d="M42 462 85 452 88 462 72 468 90 490 128 520 122 535 108 518 85 500 62 478 45 482ZM165 485 205 483 203 503 172 506ZM1010 540 1028 545 1040 570 1020 574Z"/>
            <path class="fine" d="M88 543 108 540 106 551ZM55 512 62 510 61 530 55 528ZM57 495 62 495 61 507ZM47 352 60 345 62 360 52 370ZM66 362 76 362 72 370Z"/>
          </g>
          <path class="purple" d="M82 422 97 412 125 425 110 433 90 432ZM135 460 148 460 165 490 148 497Z"/>
        </g>
      </svg>
    </div>

    <div class="panel countries">
      <div class="tabs"><span class="tab active">Countries</span><span class="tab">Regions</span><span class="tab">Cities</span></div>
      <div class="card table">
        <div class="thead"><span>Name</span><span>Count</span></div>
        <ul>
          <li><span class="name"><svg class="flag"><use href="#f-us"/></svg>United States</span><span class="bar"><i style="width:30%"></i></span><span class="count">1,577</span></li>
          <li><span class="name"><svg class="flag"><use href="#f-hk"/></svg>Hong Kong SAR</span><span class="bar"><i style="width:17%;opacity:.975"></i></span><span class="count">935</span></li>
          <li><span class="name"><svg class="flag"><use href="#f-cn"/></svg>China</span><span class="bar"><i style="width:16%;opacity:.95"></i></span><span class="count">859</span></li>
          <li><span class="name"><svg class="flag"><use href="#f-jp"/></svg>Japan</span><span class="bar"><i style="width:11%;opacity:.925"></i></span><span class="count">587</span></li>
          <li><span class="name"><svg class="flag"><use href="#f-sg"/></svg>Singapore</span><span class="bar"><i style="width:7%;opacity:.9"></i></span><span class="count">403</span></li>
          <li><span class="name"><svg class="flag"><use href="#f-tw"/></svg>Taiwan</span><span class="bar"><i style="width:4%;opacity:.87"></i></span><span class="count">230</span></li>
          <li><span class="name"><svg class="flag"><use href="#f-ca"/></svg>Canada</span><span class="bar"><i style="width:1%;opacity:.84"></i></span><span class="count">91</span></li>
          <li><span class="name"><svg class="flag"><use href="#f-de"/></svg>Germany</span><span class="bar"><i style="width:1%;opacity:.81"></i></span><span class="count">83</span></li>
          <li><span class="name"><svg class="flag"><use href="#f-gb"/></svg>United Kingdom</span><span class="bar"><i style="width:1%;opacity:.78"></i></span><span class="count">64</span></li>
          <li><span class="name"><svg class="flag"><use href="#f-au"/></svg>Australia</span><span class="bar"><i style="width:1%;opacity:.75"></i></span><span class="count">60</span></li>
        </ul>
        <button class="details"><svg width="16" height="16"><use href="#maximize"/></svg>DETAILS</button>
      </div>
    </div>
  </section>

  <section class="pair">
    <div class="panel">
      <div class="tabs"><span class="tab active">Referers</span><span class="tab">Slugs</span></div>
      <div class="card table">
        <div class="thead"><span>Name</span><span>Count</span></div>
        <ul>
          <li><span class="name"><svg class="ico"><use href="#twitter"/></svg>t.co</span><span class="bar"><i style="width:63%"></i></span><span class="count">3,303</span></li>
          <li><span class="name">(None)</span><span class="bar"><i style="width:23%;opacity:.97"></i></span><span class="count">1,250</span></li>
          <li><span class="name"><svg class="ico"><use href="#zhihu"/></svg>zhuanlan.zhihu.com</span><span class="bar"><i style="width:4%;opacity:.94"></i></span><span class="count">231</span></li>
          <li><span class="name"><svg class="ico"><use href="#m"/></svg>mall.ml</span><span class="bar"><i style="width:1%;opacity:.91"></i></span><span class="count">57</span></li>
          <li><span class="name"><svg class="ico"><use href="#m"/></svg>home.ml</span><span class="bar"><i style="width:1%;opacity:.88"></i></span><span class="count">49</span></li>
          <li><span class="name"><svg class="ico"><use href="#m"/></svg>money.ml</span><span class="bar"><i style="width:1%;opacity:.85"></i></span><span class="count">48</span></li>
          <li><span class="name"><svg class="ico"><use href="#m"/></svg>edge.ltd</span><span class="bar"><i style="width:1%;opacity:.82"></i></span><span class="count">47</span></li>
          <li><span class="name"><svg class="ico"><use href="#m"/></svg>email.beer</span><span class="bar"><i style="width:1%;opacity:.79"></i></span><span class="count">25</span></li>
          <li><span class="name"><svg class="ico"><use href="#m"/></svg>office.ml</span><span class="bar"><i style="width:1%;opacity:.76"></i></span><span class="count">24</span></li>
          <li><span class="name"><svg class="ico"><use href="#m"/></svg>pico.ltd</span><span class="bar"><i style="width:1%;opacity:.73"></i></span><span class="count">18</span></li>
        </ul>
        <button class="details"><svg width="16" height="16"><use href="#maximize"/></svg>DETAILS</button>
      </div>
    </div>
    <div class="panel">
      <div class="tabs"><span class="tab active">Languages</span><span class="tab">Timezones</span></div>
      <div class="card table">
        <div class="thead"><span>Name</span><span>Count</span></div>
        <ul>
          <li><span class="name">Chinese (China)</span><span class="bar"><i style="width:46%"></i></span><span class="count">2,448</span></li>
          <li><span class="name">(None)</span><span class="bar"><i style="width:25%;opacity:.96"></i></span><span class="count">1,318</span></li>
          <li><span class="name">English (United States)</span><span class="bar"><i style="width:16%;opacity:.93"></i></span><span class="count">869</span></li>
          <li><span class="name">Chinese (Taiwan)</span><span class="bar"><i style="width:2%;opacity:.9"></i></span><span class="count">106</span></li>
          <li><span class="name">English (United Kingd…</span><span class="bar"><i style="width:1%;opacity:.87"></i></span><span class="count">90</span></li>
          <li><span class="name">English</span><span class="bar"><i style="width:1%;opacity:.84"></i></span><span class="count">83</span></li>
          <li><span class="name">Chinese</span><span class="bar"><i style="width:1%;opacity:.81"></i></span><span class="count">59</span></li>
          <li><span class="name">Japanese</span><span class="bar"><i style="width:1%;opacity:.78"></i></span><span class="count">43</span></li>
          <li><span class="name">English (Canada)</span><span class="bar"><i style="width:1%;opacity:.75"></i></span><span class="count">34</span></li>
          <li><span class="name">Chinese (Singapore)</span><span class="bar"><i style="width:1%;opacity:.72"></i></span><span class="count">31</span></li>
        </ul>
        <button class="details"><svg width="16" height="16"><use href="#maximize"/></svg>DETAILS</button>
      </div>
    </div>
  </section>

  <section class="pair">
    <div class="panel">
      <div class="tabs"><span class="tab active">Devices</span><span class="tab">DeviceTypes</span></div>
      <div class="card table">
        <div class="thead"><span>Name</span><span>Count</span></div>
        <ul>
          <li><span class="name"><svg class="ico"><use href="#apple"/></svg>iPhone</span><span class="bar"><i style="width:34%"></i></span><span class="count">1,782</span></li>
          <li><span class="name">(None)</span><span class="bar"><i style="width:27%;opacity:.99"></i></span><span class="count">1,428</span></li>
          <li><span class="name"><svg class="ico"><use href="#apple"/></svg>Macintosh</span><span class="bar"><i style="width:23%;opacity:.98"></i></span><span class="count">1,249</span></li>
          <li><span class="name">K</span><span class="bar"><i style="width:7%;opacity:.97"></i></span><span class="count">415</span></li>
          <li><span class="name">Surface Duo</span><span class="bar"><i style="width:2%;opacity:.96"></i></span><span class="count">114</span></li>
          <li><span class="name">Nexus 5</span><span class="bar"><i style="width:1%;opacity:.95"></i></span><span class="count">36</span></li>
          <li><span class="name"><svg class="ico"><use href="#apple"/></svg>iPad</span><span class="bar"><i style="width:1%;opacity:.94"></i></span><span class="count">32</span></li>
          <li><span class="name">SM-G965U</span><span class="bar"><i style="width:1%;opacity:.93"></i></span><span class="count">10</span></li>
          <li><span class="name">22081212C</span><span class="bar"><i style="width:1%;opacity:.92"></i></span><span class="count">4</span></li>
          <li><span class="name">M2007J1SC</span><span class="bar"><i style="width:1%;opacity:.91"></i></span><span class="count">3</span></li>
        </ul>
        <button class="details"><svg width="16" height="16"><use href="#maximize"/></svg>DETAILS</button>
      </div>
    </div>
    <div class="panel">
      <div class="tabs"><span class="tab active">OS</span><span class="tab">Browsers</span><span class="tab">BrowserTypes</span></div>
      <div class="card table">
        <div class="thead"><span>Name</span><span>Count</span></div>
        <ul>
          <li><span class="name"><svg class="ico"><use href="#ios"/></svg>iOS</span><span class="bar"><i style="width:34%"></i></span><span class="count">1,817</span></li>
          <li><span class="name"><svg class="ico"><use href="#macos"/></svg>macOS</span><span class="bar"><i style="width:23%;opacity:.83"></i></span><span class="count">1,249</span></li>
          <li><span class="name"><svg class="ico"><use href="#windows"/></svg>Windows</span><span class="bar"><i style="width:15%;opacity:.68"></i></span><span class="count">795</span></li>
          <li><span class="name"><svg class="ico"><use href="#android"/></svg>Android</span><span class="bar"><i style="width:14%;opacity:.56"></i></span><span class="count">746</span></li>
          <li><span class="name">(None)</span><span class="bar"><i style="width:8%;opacity:.44"></i></span><span class="count">435</span></li>
          <li><span class="name"><svg class="ico"><use href="#linux"/></svg>Linux</span><span class="bar"><i style="width:3%;opacity:.34"></i></span><span class="count">159</span></li>
          <li><span class="name"><svg class="ico"><use href="#harmony"/></svg>HarmonyOS</span><span class="bar"><i style="width:1%;opacity:.22"></i></span><span class="count">10</span></li>
          <li><span class="name"><svg class="ico"><use href="#chromeos"/></svg>Chrome OS</span><span class="bar"><i style="width:1%;opacity:.12"></i></span><span class="count">1</span></li>
        </ul>
        <button class="details"><svg width="16" height="16"><use href="#maximize"/></svg>DETAILS</button>
      </div>
    </div>
  </section>
</main>

<footer>
  <div class="legal"><strong>Sink</strong><span>© 2024 Products of HTML.ZONE</span></div>
  <div class="social">
    <svg><use href="#gmail"/></svg><svg><use href="#telegram"/></svg><svg><use href="#blogger"/></svg><svg><use href="#x"/></svg><svg><use href="#mastodon"/></svg><svg><use href="#github"/></svg>
  </div>
</footer>
</body>
</html>
```

FILE: styles.css
```css
* { box-sizing: border-box; margin: 0; padding: 0; }
html { background: #fff; overflow: hidden; }
body {
  zoom: 1.4146;
  width: 1464px;
  height: 2895px;
  padding: 0 64px;
  font: 400 14px/20px Inter, "Liberation Sans", sans-serif;
  letter-spacing: -.012em;
  color: #09090b;
  background: #fff;
}
svg { flex: none; letter-spacing: 0; }
.sprite { position: absolute; width: 0; height: 0; }
.line { fill: none; stroke: currentColor; stroke-width: 2; stroke-linecap: round; stroke-linejoin: round; }

/* header */
.topbar { display: flex; align-items: center; justify-content: space-between; height: 96px; border-bottom: 1px solid #dfe1e6; }
.brand { display: flex; align-items: center; gap: 8px; font-size: 20px; font-weight: 700; letter-spacing: 0; color: #111827; }
.topbar nav { display: flex; align-items: center; gap: 24px; }
.nav-link { font-size: 16px; letter-spacing: -.014em; color: #374151; }
.github-btn { display: flex; align-items: center; gap: 4px; height: 44px; padding: 0 24px; border-radius: 22px; background: #111827; color: #fff; font-weight: 500; letter-spacing: 0; }

/* page controls */
.crumb-row { display: flex; justify-content: space-between; height: 44px; padding-top: 24px; }
.crumbs { display: flex; align-items: center; gap: 10px; height: 20px; letter-spacing: -.017em; color: #71717a; }
.crumbs .current { color: #09090b; }
.filter-row { display: flex; justify-content: space-between; margin-top: 24px; }
.tabs { display: flex; width: max-content; height: 40px; padding: 4px; border-radius: 6px; background: #f4f4f5; }
.tab { padding: 6px 12px; border-radius: 4px; font-weight: 500; color: #71717a; }
.tab.active { background: #fff; color: #09090b; box-shadow: 0 1px 2px rgba(0, 0, 0, .08); }
.select { display: flex; align-items: center; height: 40px; padding: 0 12px; border: 1px solid #dedee1; border-radius: 6px; }
.select svg { opacity: .5; }

/* cards */
.card { border: 1px solid #dedee1; border-radius: 8px; background: #fff; box-shadow: 0 1px 2px rgba(0, 0, 0, .05); }
.card h2 { padding-top: 1px; font-size: 24px; line-height: 23px; font-weight: 600; letter-spacing: -.053em; }
.stats { display: grid; grid-template-columns: repeat(3, 1fr); gap: 16px; margin-top: 24px; }
.stat { height: 110px; padding: 24px; }
.stat h3 { display: flex; align-items: center; justify-content: space-between; font-size: 14px; font-weight: 500; }
.stat h3 svg { color: #71717a; }
.stat p { margin-top: 8px; font-size: 24px; line-height: 33px; font-weight: 700; letter-spacing: 0; }

/* views chart */
.views { height: 474px; margin-top: 24px; padding: 24px; }
.legend { display: flex; justify-content: flex-end; gap: 24px; height: 16px; margin-top: 6px; padding-right: 16px; font: 12px/17px "Liberation Sans", Arial, sans-serif; letter-spacing: 0; color: #6b7280; }
.legend span { display: flex; align-items: center; gap: 8px; }
.dot { width: 9px; height: 9px; border-radius: 50%; }
.blue.dot { background: #38bdf8; }
.green.dot { background: #38d39a; }
.chart { display: block; width: 1286px; height: 378px; overflow: visible; }
.chart text { font: 12px "Liberation Sans", Arial, sans-serif; fill: #71717a; }
.ylabels text { text-anchor: end; }
.xlabels text { text-anchor: middle; }
.grid { fill: none; stroke: #f4f4f5; stroke-width: 1.2; }
.axis { fill: none; stroke: #ececee; stroke-width: 1.2; }
.series { fill: none; stroke-width: 2; }
.series.visits { stroke: #38d39a; }
.series.visitors { stroke: #38bdf8; }

/* locations */
.geo { display: grid; grid-template-columns: 880px 424px; gap: 32px; margin-top: 24px; }
.locations { height: 620px; padding: 24px; }
.map { display: block; width: 830px; height: 546px; }
.map path { stroke: #fff; stroke-width: 2.6; stroke-linejoin: round; stroke-opacity: .85; }
.map .fine { stroke-width: 1; stroke: currentColor; stroke-opacity: .45; }
.map .none { fill: #dce3ea; color: #dce3ea; }
.map .border { fill: none; stroke-width: 3; }
.map .red { fill: #ff6b7d; color: #ff6b7d; }
.map .purple { fill: #6859be; color: #6859be; }
.map .yellow { fill: #f4b73f; color: #f4b73f; }
.map .teal { fill: #04c29c; color: #04c29c; }
.map .blue { fill: #4d8cfd; color: #4d8cfd; }
.map .green { fill: #a6ce75; color: #a6ce75; }

/* ranking tables */
.pair { display: grid; grid-template-columns: 1fr 1fr; gap: 32px; margin-top: 32px; }
.table { display: flex; flex-direction: column; height: 572px; margin-top: 8px; }
.thead { display: flex; align-items: center; justify-content: space-between; height: 49px; padding: 0 16px; border-bottom: 1px solid #dedee1; font-weight: 500; letter-spacing: 0; color: #71717a; }
.table ul { list-style: none; flex: 1; }
.table li { display: grid; grid-template-columns: 192px 296px 1fr; align-items: center; height: 45px; padding: 0 16px; border-bottom: 1px solid #dedee1; }
.countries li { grid-template-columns: 192px 113.5px 1fr; }
.table li:last-child { height: 44px; border-bottom: 0; }
.name { width: 160px; font-weight: 500; white-space: nowrap; overflow: hidden; text-overflow: ellipsis; }
.ico { display: inline-block; width: 20px; height: 20px; vertical-align: -5px; }
.flag { display: inline-block; width: 13px; height: 13px; margin-right: 5px; vertical-align: -2px; }
.bar { height: 12px; margin-bottom: 2px; border-radius: 6px; background: #f4f4f5; overflow: hidden; }
.bar i { display: block; height: 100%; background: #38d39a; }
.count { text-align: right; font-weight: 500; letter-spacing: 0; }
.details { display: flex; align-items: center; justify-content: center; gap: 8px; height: 36px; margin: 0 auto 26px; border: 0; background: none; font: 500 14px/20px Inter, "Liberation Sans", sans-serif; color: #18181b; }

/* footer */
footer { display: flex; align-items: center; justify-content: space-between; height: 110px; padding-top: 25px; }
.legal { display: flex; align-items: center; letter-spacing: -.016em; color: #6b7280; }
.legal strong { font-size: 20px; font-weight: 900; letter-spacing: -.01em; color: #111827; }
.legal span { margin-left: 16px; padding-left: 16px; border-left: 1px solid #e5e7eb; }
.social { display: flex; gap: 20px; color: #9ca3af; }
.social svg { width: 24px; height: 24px; }
```
